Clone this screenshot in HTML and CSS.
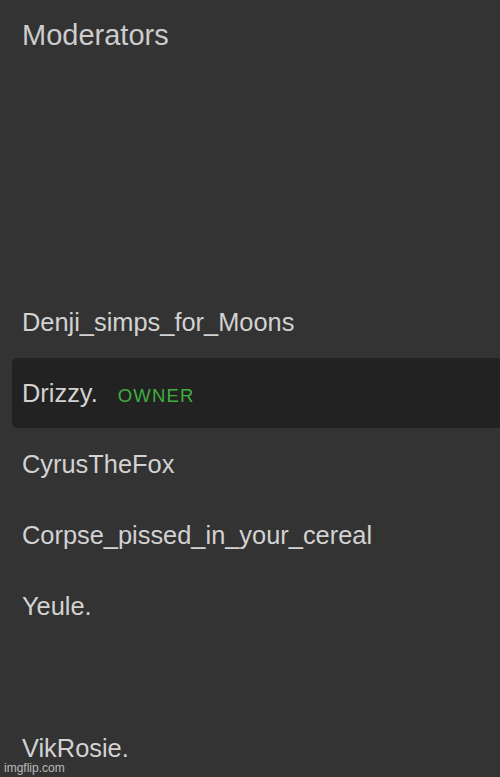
FILE: index.html
```html
<!DOCTYPE html>
<html>
<head>
<meta charset="utf-8">
<link rel="stylesheet" href="styles.css">
</head>
<body>
<div class="panel">
  <h2 class="title">Moderators</h2>
  <ul class="list">
    <li class="row"><span class="name">Denji_simps_for_Moons</span></li>
    <li class="row active"><span class="name">Drizzy.</span><span class="badge">OWNER</span></li>
    <li class="row"><span class="name">CyrusTheFox</span></li>
    <li class="row"><span class="name">Corpse_pissed_in_your_cereal</span></li>
    <li class="row"><span class="name">Yeule.</span></li>
    <li class="row empty"></li>
    <li class="row"><span class="name">VikRosie.</span></li>
  </ul>
</div>
<div class="watermark">imgflip.com</div>
</body>
</html>
```
FILE: styles.css
```css
html, body {
  margin: 0;
  padding: 0;
  background: #333333;
  height: 777px;
  overflow: hidden;
}
body {
  font-family: "Liberation Sans", Arial, sans-serif;
  color: #d2d2d2;
  position: relative;
}
.panel {
  display: flex;
  flex-direction: column;
}
.title {
  margin: 0;
  height: 287px;
  box-sizing: border-box;
  padding: 17px 0 0 22px;
  font-weight: normal;
  font-size: 29px;
  line-height: 36px;
  color: #cccccc;
}
.list {
  list-style: none;
  margin: 0;
  padding: 0;
  display: flex;
  flex-direction: column;
}
.row {
  height: 71px;
  display: flex;
  align-items: center;
  padding-left: 22px;
  font-size: 25.4px;
  box-sizing: border-box;
}
.row.active {
  background: #222222;
  margin-left: 12px;
  padding-left: 10px;
  border-radius: 5px 0 0 5px;
  height: 70px;
  margin-bottom: 1px;
}
.badge {
  color: #3fae3f;
  font-size: 18.5px;
  letter-spacing: 1.2px;
  margin-left: 20px;
  margin-top: 6px;
}
.watermark {
  position: absolute;
  left: 4px;
  bottom: 2px;
  font-size: 12px;
  color: rgba(230,230,230,0.75);
}
```
